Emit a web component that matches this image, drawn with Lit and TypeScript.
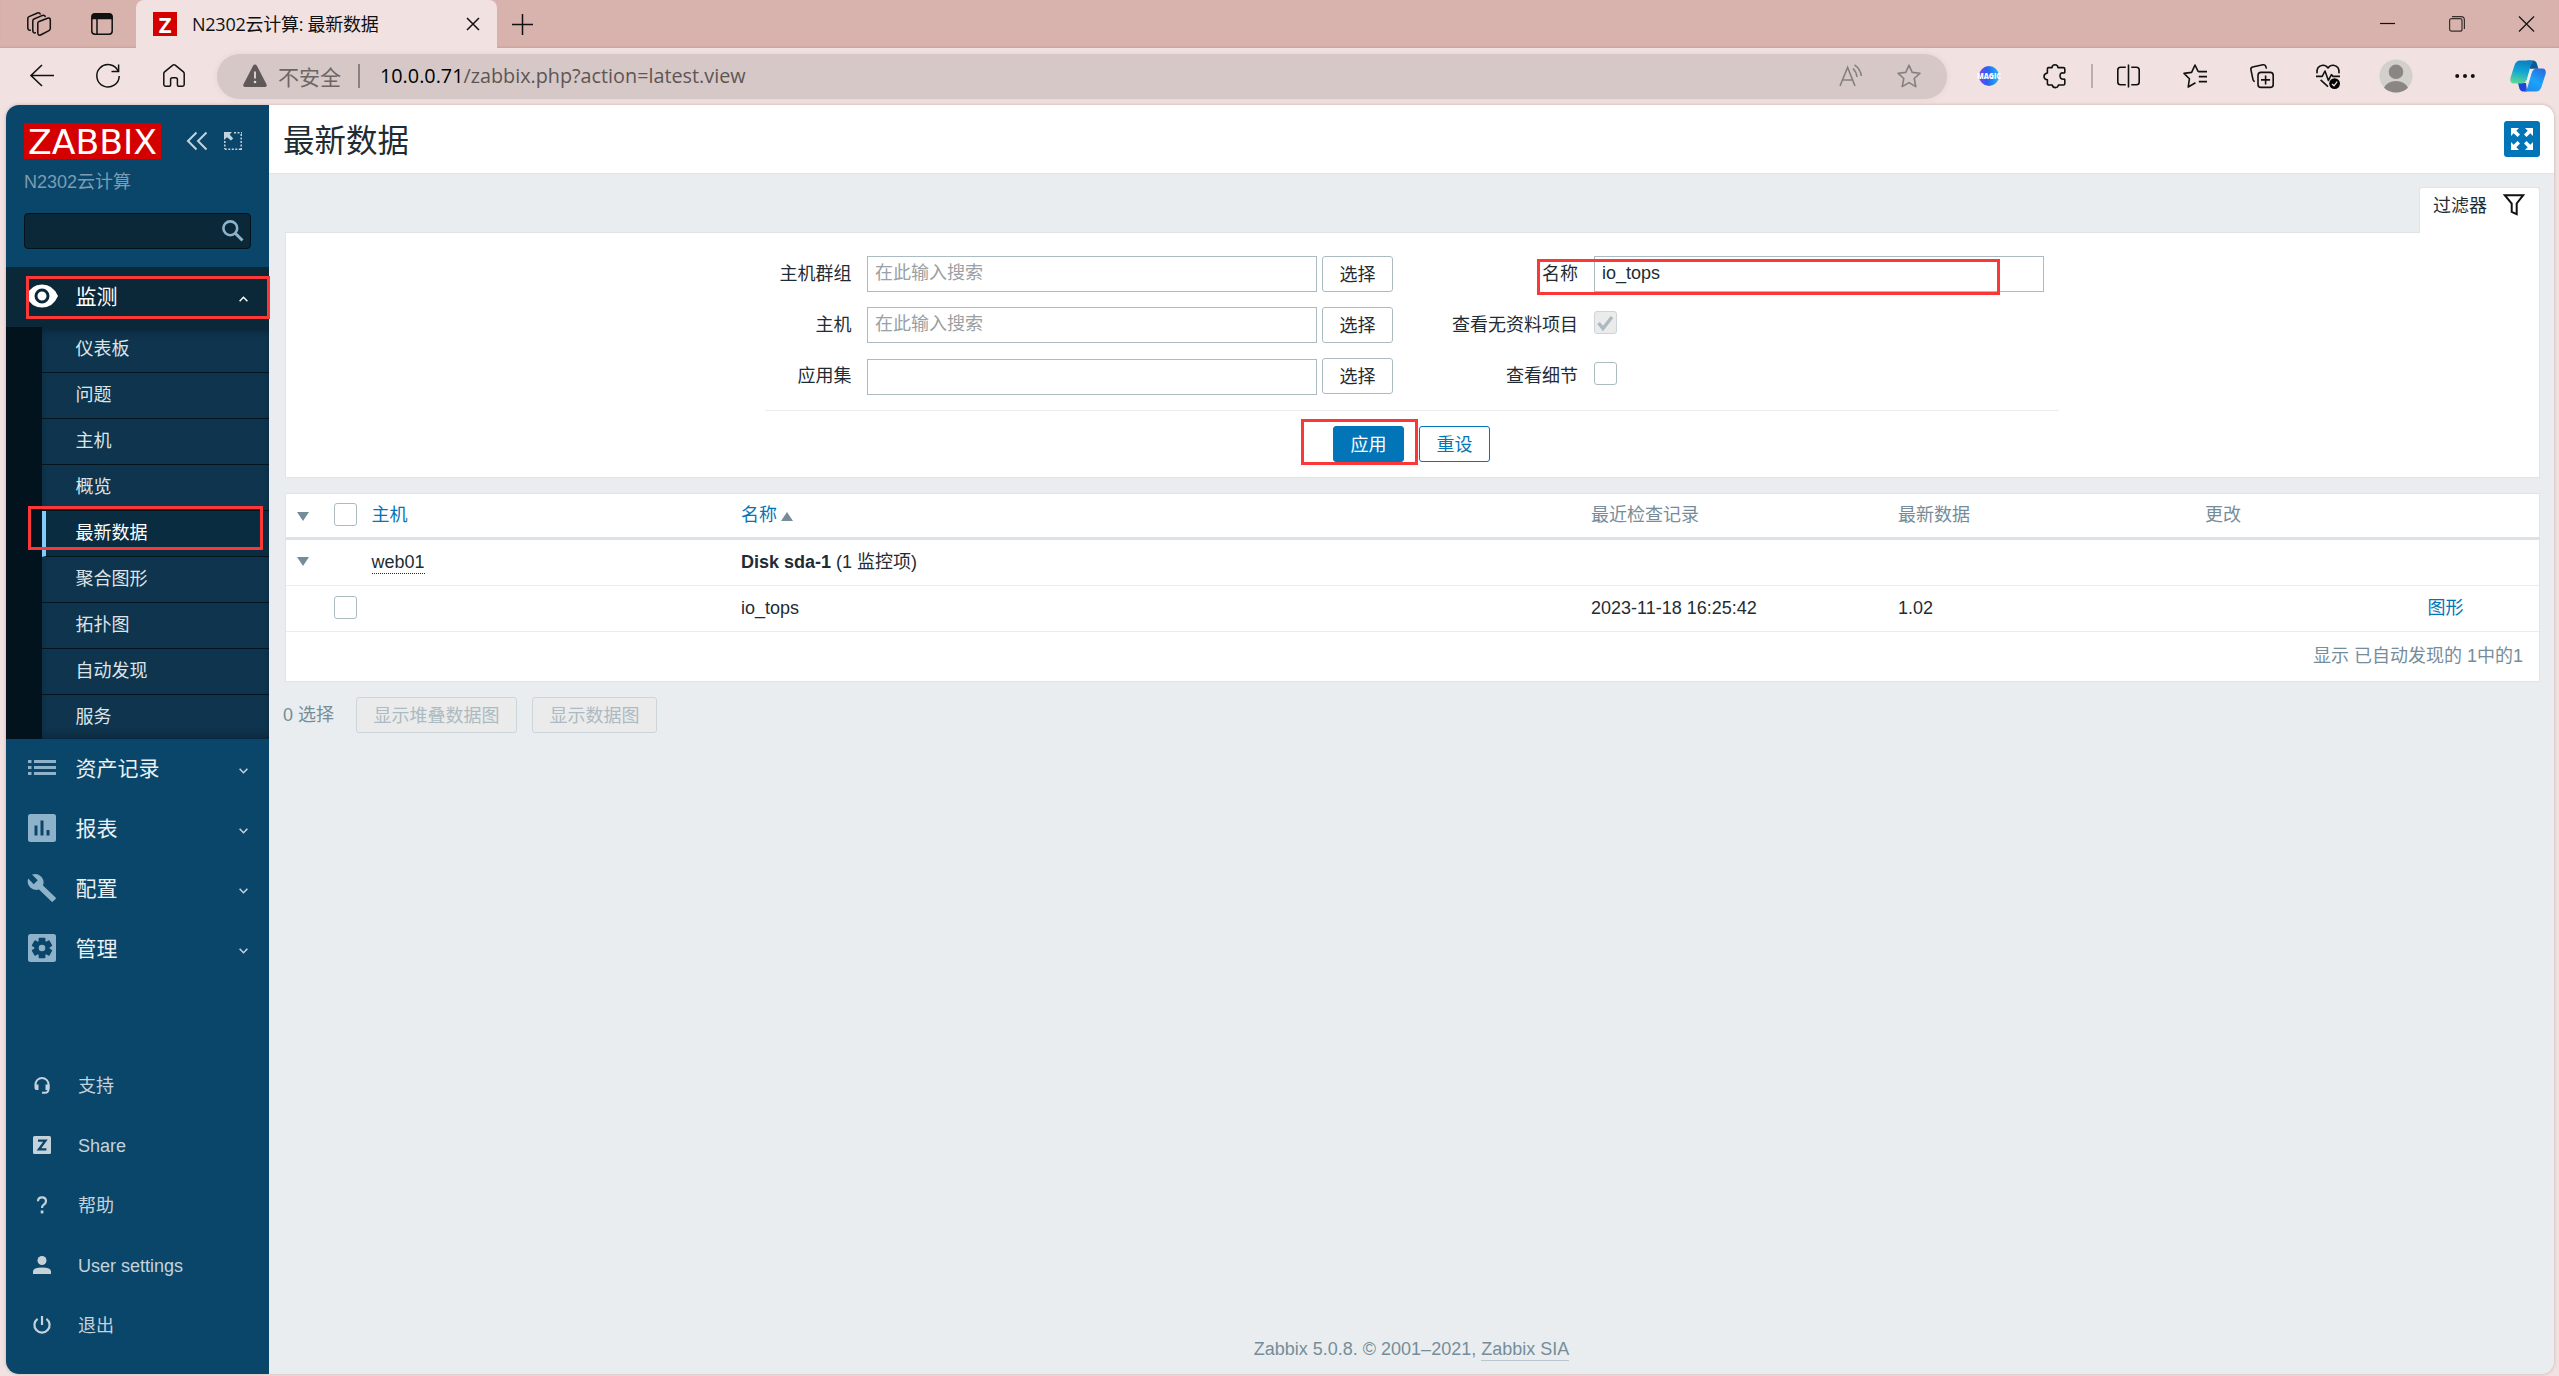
import { LitElement, html, svg, css, nothing, TemplateResult } from "lit";
import { customElement } from "lit/decorators.js";
import { classMap } from "lit/directives/class-map.js";

const icon = (w: number, h: number, body: unknown, cls = "") =>
  html`<svg class="ico ${cls}" width=${w} height=${h} viewBox="0 0 ${w} ${h}" fill="none">${body}</svg>`;

const STAR = "M12 1.2 L15.2 8.4 L23 9.2 L17.2 14.5 L18.8 22.6 L12 18.6 L5.2 22.6 L6.8 14.5 L1 9.2 L8.8 8.4 Z";

/* ---------- Browser chrome ---------- */

@customElement("browser-bar")
export class BrowserBar extends LitElement {
  static styles = css`
    :host { display: block; color: #111; font-family: "Open Sans", "Noto Sans CJK SC", sans-serif; }
    .ico { display: block; flex: none; overflow: visible; }
    .strip { height: 48px; background: #d8b2ac; display: flex; align-items: center; box-shadow: inset 0 -2px 2px -1px #c79f9a; }
    .ws { margin-left: 27px; }
    .vt { margin-left: 40px; }
    .tab { margin-left: 23px; width: 361px; height: 48px; background: #f1e2e1; border-radius: 8px 8px 0 0; display: flex; align-items: center; box-sizing: border-box; padding: 0 17px; }
    .fav { width: 24px; height: 24px; background: #d40000; color: #fff; font: 700 22px/24px "Open Sans", sans-serif; text-align: center; }
    .title { margin-left: 15px; font-size: 18px; line-height: 24px; white-space: nowrap; flex: 1; letter-spacing: -0.25px; }
    .plus { margin-left: 15px; }
    .win { margin-left: auto; display: flex; align-items: center; gap: 54px; padding-right: 25px; }
    .tools { height: 57px; background: #f1e2e1; display: flex; align-items: center; box-sizing: border-box; padding-bottom: 1px; }
    .back { margin-left: 30px; }
    .reload { margin-left: 42px; }
    .home { margin-left: 43px; }
    .url { margin-left: 32px; width: 1730px; height: 45px; border-radius: 23px; background: #d6c8c7; display: flex; align-items: center; box-sizing: border-box; padding-left: 26px; box-shadow: 0 0 6px #e3d2d0; font-size: 19.8px; color: #5d5655; white-space: nowrap; }
    .warn-text { margin-left: 11px; font-size: 21px; color: #6c6665; width: 63px; }
    .bar { width: 2px; height: 24px; background: #8a8281; margin: 0 20px 0 17px; }
    .addr { padding-bottom: 1px; }
    .addr b { font-weight: 400; color: #000; }
    .read { margin-left: auto; }
    .favs { margin: 0 26px 0 35px; }
    .ext { display: grid; grid-template-columns: 66px 66px 8px 65px 68px 65px 67px 70px 68px 58px; justify-items: center; align-items: center; margin-left: 9px; }
    .sep { width: 2px; height: 24px; background: #bdaeac; }
  `;

  render() {
    const k = "#111";
    return html`
      <div class="strip">
        ${icon(24, 24, svg`<g stroke=${k} stroke-width="1.5" stroke-linejoin="round" stroke-linecap="round">
          <path d="M11.5 9.8 L20.5 6.2 Q23.3 5.4 23.3 8 V16.6 Q23.3 18 22 18.6 L13.5 23 Q11 23.8 10.8 21 V11.2 Q10.8 10.2 11.5 9.8Z"/>
          <path d="M8.3 20.8 Q6 21.3 5.8 18.6 V9 Q5.8 7.6 7 7 L15.5 3.4 Q17.6 2.9 18.2 4.4"/>
          <path d="M3.3 18.3 Q1 18.4 .8 16 V6.6 Q.8 5.2 2 4.6 L10.5 1 Q12.6 .4 13.2 2"/></g>`, "ws")}
        ${icon(22, 22, svg`<rect x=".8" y=".8" width="20.4" height="20.4" rx="3.2" stroke=${k} stroke-width="1.5"/><path d="M.8 6.3V4Q.8.8 4 .8H18Q21.2.8 21.2 4V6.3Z" fill=${k}/><path d="M6 6V21" stroke=${k} stroke-width="1.5"/>`, "vt")}
        <div class="tab">
          <div class="fav">Z</div>
          <div class="title">N2302云计算: 最新数据</div>
          ${icon(14, 14, svg`<path d="M1 1L13 13M13 1L1 13" stroke=${k} stroke-width="1.5"/>`)}
        </div>
        ${icon(21, 21, svg`<path d="M10.5 0V21M0 10.5H21" stroke=${k} stroke-width="1.5"/>`, "plus")}
        <div class="win">
          ${icon(15, 16, svg`<path d="M0 7.5H15" stroke=${k} stroke-width="1.2"/>`)}
          ${icon(16, 16, svg`<rect x=".6" y="2.6" width="12.4" height="12.6" rx="2" stroke="#3b2f2e" stroke-width="1.2"/><path d="M3 .7H12Q15.4.7 15.4 4V13" stroke="#3b2f2e" stroke-width="1.2"/>`)}
          ${icon(15, 16, svg`<path d="M0 .5L15 15.5M15 .5L0 15.5" stroke=${k} stroke-width="1.2"/>`)}
        </div>
      </div>
      <div class="tools">
        ${icon(24, 24, svg`<path d="M24 11.5H1M12 1L1 11.5L12 22" stroke=${k} stroke-width="1.6"/>`, "back")}
        ${icon(24, 24, svg`<path d="M22.2 7.2A11.2 11.2 0 1 0 23.2 12" stroke=${k} stroke-width="1.5"/><path d="M22.6 .5V7.6H15.5" stroke=${k} stroke-width="1.5"/>`, "reload")}
        ${icon(22, 24, svg`<path d="M.8 9.6Q.8 8.6 1.6 7.9L9.8 1.2Q11 .4 12.2 1.2L20.4 7.9Q21.2 8.6 21.2 9.6V20.6Q21.2 22.2 19.6 22.2H15.6Q14.4 22.2 14.4 21V15.6Q14.4 13.8 12.6 13.8H9.4Q7.6 13.8 7.6 15.6V21Q7.6 22.2 6.4 22.2H2.4Q.8 22.2 .8 20.6Z" stroke=${k} stroke-width="1.5"/>`, "home")}
        <div class="url">
          ${icon(24, 24, svg`<path d="M12 .6Q13.2.6 13.9 1.8L23.5 20.2Q24.5 23 22 23H2Q-.5 23 .5 20.2L10.1 1.8Q10.8.6 12 .6Z" fill="#5f5a59"/><path d="M12 7.4V14.6" stroke="#e4d9d8" stroke-width="1.8"/><circle cx="12" cy="18" r="1.3" fill="#e4d9d8"/>`)}
          <span class="warn-text">不安全</span>
          <span class="bar"></span>
          <span class="addr"><b>10.0.0.71</b>/zabbix.php?action=latest.view</span>
          ${icon(23, 24, svg`<path d="M1 22L8.6 3.5L16 22M3.6 16H13.6M14 4.5Q17.5 8 18 13M15.5 .8Q21.5 5 22.3 12" stroke="#858080" stroke-width="1.6"/>`, "read")}
          ${icon(24, 24, svg`<path d=${STAR} stroke="#858080" stroke-width="1.6" stroke-linejoin="round"/>`, "favs")}
        </div>
        <div class="ext">
          ${icon(24, 24, svg`<defs><linearGradient id="mg" x1="0" y1="0" x2="1" y2="0"><stop offset="0" stop-color="#8b3df0"/><stop offset=".4" stop-color="#2a5ff2"/><stop offset="1" stop-color="#22b4f5"/></linearGradient></defs><circle cx="12" cy="12" r="10" fill="url(#mg)"/><text x="0" y="15" textLength="24" lengthAdjust="spacingAndGlyphs" font-family="Open Sans" font-weight="800" font-size="8" fill="#fff">MAGIC</text>`)}
          ${icon(24, 24, svg`<path d="M5.4 3.6H9Q9.2.8 12 .8T15 3.6H20.4Q21.8 3.6 21.8 5V8.6Q21.6 9.2 20.6 9Q17 8.4 17 11.8T20.6 15.2Q21.6 15 21.8 15.8V19.6Q21.8 21 20.4 21H15.4Q15 23.6 12.4 23.6T9.2 21H6.2Q4.4 21 4.4 19.4V15.8Q1 15.2 1 12.4T4.4 9V5Q4.4 3.6 5.4 3.6Z" stroke=${k} stroke-width="1.6" stroke-linejoin="round"/>`)}
          <span class="sep"></span>
          ${icon(23, 24, svg`<path d="M8.8 3.2H3.6Q.8 3.2.8 6V18Q.8 20.8 3.6 20.8H8.8M14.2 3.2H19.4Q22.2 3.2 22.2 6V18Q22.2 20.8 19.4 20.8H14.2M11.5 .5V23.5" stroke=${k} stroke-width="1.6"/>`)}
          ${icon(24, 24, svg`<path d="M12.5 18.8L5.2 23L6.4 14.8L1 9.4L8.6 8.4L12 1L15.2 7.6M15.2 7.6H24M15.8 12.6H24M15.8 17.6H24" stroke=${k} stroke-width="1.6" stroke-linejoin="round"/>`)}
          ${icon(24, 24, svg`<rect x="8" y="8.4" width="15.2" height="15" rx="3" stroke=${k} stroke-width="1.6"/><path d="M15.6 11.4V20.4M11 15.9H20.1M4.8 17.6Q3.4 17.2 3 15.6L.9 5.6Q.6 3.6 2.6 3L12.8.8Q15 .4 15.8 2.4L16.4 4.6" stroke=${k} stroke-width="1.6"/>`)}
          ${icon(24, 24, svg`<path d="M1 9.4Q.2 2 6.6 1.2Q10 1 12 4Q14 1 17.4 1.2Q23.8 2 23 9.4M0 12.4H6.2L9 7L12.4 16.4L15.4 10.6L17 12.4H24M4.6 15.8L12 22.6" stroke=${k} stroke-width="1.6" stroke-linejoin="round"/><circle cx="18.6" cy="19.6" r="5.4" fill="#000"/><path d="M16 20L18 21.8L21.2 17.6" stroke="#f1e2e1" stroke-width="1.3"/>`)}
          ${icon(34, 34, svg`<circle cx="17" cy="17" r="16.6" fill="#d3d0cc"/><circle cx="17" cy="12.8" r="7.3" fill="#8b8683"/><path d="M5 28.8Q8.5 22 17 22T29 28.8Q24 33.6 17 33.6T5 28.8Z" fill="#8b8683"/>`)}
          ${icon(20, 6, svg`<circle cx="2.2" cy="3" r="2" fill="#111"/><circle cx="10" cy="3" r="2" fill="#111"/><circle cx="17.8" cy="3" r="2" fill="#111"/>`)}
          ${icon(36, 32, svg`<defs><linearGradient id="ca" x1=".5" y1="0" x2=".3" y2="1"><stop offset="0" stop-color="#0a7fc2"/><stop offset=".45" stop-color="#12a4d4"/><stop offset="1" stop-color="#5edb92"/></linearGradient><linearGradient id="cb" x1=".8" y1="0" x2=".3" y2="1"><stop offset="0" stop-color="#2b6be0"/><stop offset=".55" stop-color="#1ba4fa"/><stop offset="1" stop-color="#1f8af0"/></linearGradient></defs>
            <path d="M17 .5H23Q26 .6 27 4L28.4 8.8H20Z" fill="#0b5a93"/><path d="M8 23H16L17 31.5H13.5Q10.400 31.500 9.400 28.400Z" fill="#1b46d8"/>
            <path d="M10 .5H20.5Q23.500 .7 22.600 3.600Q21 3.800 20 8L17 19.500Q15.600 23.600 11.600 23.600H3.600Q-.6 23.400 .4 18L4.600 5Q6.200.5 10 .5Z" fill="url(#ca)"/>
            <path d="M26 31.5H13.5Q16.500 31 17.600 27L21.400 13.500Q23 8.600 27 8.600H32.400Q36.600 8.800 35.600 14L31.400 27Q29.800 31.500 26 31.500Z" fill="url(#cb)"/>
            <path d="M19.600 10.500H22.400Q21.600 11.800 21.200 13.500L18.600 22.400H14.600Q16.300 21.500 17 19.500Z" fill="#f4ecec"/>`)}
        </div>
      </div>`;
  }
}

/* ---------- Sidebar ---------- */

type Main = { label: string; art: TemplateResult };

@customElement("side-nav")
export class SideNav extends LitElement {
  static styles = css`
    :host { width: 263px; flex: none; background: #0a466a; display: flex; flex-direction: column; position: relative; font: 18px/24px "Liberation Sans", "Noto Sans CJK SC", sans-serif; color: #eaf0f3; }
    .ico { display: block; flex: none; overflow: visible; }
    .head { display: flex; align-items: center; padding: 18px 0 0 18px; height: 36px; }
    .logo { display: block; background: #d40000; }
    .collapse { margin-left: 26px; }
    .kiosk { margin-left: 17px; }
    .server { margin: 11px 0 0 18px; height: 24px; color: #7c9cb1; }
    .search { margin: 19px 18px 18px; height: 36px; box-sizing: border-box; border: 1px solid #03131d; border-radius: 4px; background: #0a2838; display: flex; align-items: center; justify-content: flex-end; padding-right: 6px; }
    .row { height: 60px; display: flex; align-items: center; font-size: 21px; }
    .row.open { background: #0a2838; color: #fff; }
    .slot { width: 69.5px; box-sizing: border-box; padding-left: 20px; }
    .slot .ico { width: 32px; margin-top: -2px; }
    .name { flex: 1; padding-bottom: 1px; }
    .chev { margin: 4px 21px 0 0; }
    .sub { background: #0f344d; border-left: 36px solid #03131d; box-shadow: inset 0 9px 9px -6px #0a2232, inset 0 -6px 8px -5px #0a2232; height: 412px; }
    .item { height: 45px; border-bottom: 1px solid #04141f; display: flex; align-items: center; padding: 0 0 1px 33.5px; box-sizing: border-box; height: 46px; color: #dde4e9; }
    .item:last-child { border-bottom: 0; height: 44px; }
    .item.on { background: #0a2c41; color: #fff; border-left: 4px solid #81ccff; padding-left: 29.5px; }
    .foot { margin-top: auto; padding-bottom: 18px; }
    .link { height: 60px; display: flex; align-items: center; color: #c6d2da; }
    .cell { width: 72px; box-sizing: border-box; padding: 0 0 2px 27px; }
    .mark { position: absolute; border: 3px solid #fb3737; box-sizing: border-box; }
    .m1 { left: 20px; top: 171px; width: 244px; height: 43px; }
    .m2 { left: 22px; top: 401px; width: 235px; height: 44px; }
  `;

  private subs = ["仪表板", "问题", "主机", "概览", "最新数据", "聚合图形", "拓扑图", "自动发现", "服务"];

  private mains: Main[] = [
    { label: "资产记录", art: icon(32, 28, svg`<path d="M2 7.5H5.5M8 7.5H30M2 13.5H5.5M8 13.5H30M2 19.5H5.5M8 19.5H30" stroke="#8db2ca" stroke-width="3"/>`) },
    { label: "报表", art: icon(32, 28, svg`<path fill-rule="evenodd" d="M4.5 0H27.5Q30 0 30 2.5V25.500Q30 28 27.5 28H4.500Q2 28 2 25.5V2.500Q2 0 4.500 0ZM8.500 11.500V21.500H11.500V11.500ZM14.500 6.500V21.500H17.500V6.500ZM20.500 16V21.500H23.500V16Z" fill="#8db2ca"/>`) },
    { label: "配置", art: icon(32, 28, svg`<path d="M29.600 23.600L17 11.400Q18.800 6.200 15 2.400Q11 -1.400 6 .6L11.700 6.200L7.700 10.200L2.200 4.600Q.4 9.600 4.200 13.400Q8 17 13 15.400L25.500 27.600Q26.200 28.200 26.900 27.600L29.600 25Q30.200 24.300 29.600 23.600Z" fill="#8db2ca"/>`) },
    { label: "管理", art: icon(32, 28, svg`<rect x="2" y="0" width="28" height="28" rx="2.500" fill="#8db2ca"/><g fill="#0a466a"><circle cx="16" cy="14" r="7.600"/>${[0, 60, 120].map((a) => svg`<rect x="12.600" y="3.800" width="6.800" height="20.400" rx="1" transform="rotate(${a} 16 14)"/>`)}</g><circle cx="16" cy="14" r="3.300" fill="#8db2ca"/>`) },
  ];

  private links: Main[] = [
    { label: "支持", art: icon(18, 18, svg`<path d="M2.500 9V8.500A6.500 6.500 0 0 1 15.500 8.500V13Q15.500 16.800 12 16.800H9" stroke="#c6d2da" stroke-width="2"/><path d="M1.500 8.500H5.500V14H3.500Q1.500 14 1.500 12ZM12.500 8.500H16.500V12Q16.500 14 14.500 14H12.500Z" fill="#c6d2da"/>`) },
    { label: "Share", art: icon(18, 18, svg`<rect width="18" height="18" rx="1.500" fill="#c6d2da"/><path d="M5 4.600H12.400L6 13.400H13.400" stroke="#0a466a" stroke-width="2.400"/>`) },
    { label: "帮助", art: icon(18, 18, svg`<path d="M5 5.200Q5 1.300 9 1.300T13 5Q13 7.200 10.800 8.600Q9 9.700 9 12" stroke="#c6d2da" stroke-width="2.200"/><rect x="7.700" y="14.500" width="2.700" height="2.900" fill="#c6d2da"/>`) },
    { label: "User settings", art: icon(18, 18, svg`<circle cx="9" cy="4.500" r="4.500" fill="#c6d2da"/><path d="M0 18V15.500Q0 11.500 9 11.500T18 15.500V18Z" fill="#c6d2da"/>`) },
    { label: "退出", art: icon(18, 18, svg`<path d="M9 0V9M4.600 2.800A7.600 7.600 0 1 0 13.400 2.800" stroke="#c6d2da" stroke-width="2.200"/>`) },
  ];

  render() {
    const down = icon(9, 6, svg`<path d="M.6 .8L4.500 4.700L8.400 .8" stroke="#c6d6e0" stroke-width="1.500"/>`, "chev");
    return html`
      <div class="head">
        <svg class="ico logo" width="137" height="36"><text x="4" y="30.500" textLength="129" lengthAdjust="spacingAndGlyphs" font-family="DejaVu Sans" font-size="34.500" fill="#fff">ZABBIX</text></svg>
        ${icon(20, 18, svg`<path d="M9.500 .5L1 9L9.500 17.500M19.500 .5L11 9L19.500 17.500" stroke="#c3d3de" stroke-width="2"/>`, "collapse")}
        ${icon(18, 18, svg`<path d="M10 .8H18M17.200 2V18M.8 17.200H17M.8 9V17" stroke="#c3d3de" stroke-width="1.500" stroke-dasharray="2 1.500"/><path d="M0 0H8L5.600 2.400L9.200 6.400L7 8.600L3 5.200L0 8Z" fill="#c3d3de"/>`, "kiosk")}
      </div>
      <div class="server">N2302云计算</div>
      <div class="search">${icon(22, 22, svg`<circle cx="8.300" cy="8.300" r="6.900" stroke="#8db2ca" stroke-width="2.600"/><path d="M13 13L20.500 20.500" stroke="#8db2ca" stroke-width="3"/>`)}</div>
      <div class="row open">
        <div class="slot">${icon(32, 24, svg`<path d="M0 12Q5 .5 16 .5T32 12Q27 23.500 16 23.500T0 12Z" fill="#fff"/><circle cx="16" cy="12" r="6" stroke="#0a2838" stroke-width="3"/>`)}</div>
        <div class="name">监测</div>
        ${icon(9, 6, svg`<path d="M.6 5.200L4.500 1.300L8.400 5.200" stroke="#fff" stroke-width="1.500"/>`, "chev")}
      </div>
      <div class="sub">${this.subs.map((s) => html`<div class=${classMap({ item: true, on: s === "最新数据" })}>${s}</div>`)}</div>
      ${this.mains.map((m) => html`<div class="row"><div class="slot">${m.art}</div><div class="name">${m.label}</div>${down}</div>`)}
      <div class="foot">${this.links.map((l) => html`<div class="link"><div class="cell">${l.art}</div>${l.label}</div>`)}</div>
      <div class="mark m1"></div>
      <div class="mark m2"></div>`;
  }
}

/* ---------- Latest data view ---------- */

@customElement("latest-data")
export class LatestData extends LitElement {
  static styles = css`
    :host { flex: 1; min-width: 0; display: flex; flex-direction: column; background: #e9edf0; font: 18px/24px "Liberation Sans", "Noto Sans CJK SC", sans-serif; color: #1f2c33; }
    .ico { display: block; flex: none; overflow: visible; }
    .top { height: 69px; box-sizing: border-box; background: #fff; border-bottom: 1px solid #dfe4e7; display: flex; align-items: center; justify-content: space-between; padding: 0 14px 0 14px; }
    h1 { margin: 0; font-weight: 400; font-size: 31.500px; line-height: 40px; padding-top: 3px; }
    .full { width: 36px; height: 36px; border-radius: 3px; background: #0275b8; display: grid; place-items: center; margin-top: -1px; }
    .body { padding: 13px 14px 0 16px; flex: 1; display: flex; flex-direction: column; }
    .ftab { align-self: flex-end; width: 121px; height: 46px; margin-bottom: -1px; box-sizing: border-box; background: #fff; border: 1px solid #dfe4e7; border-bottom: 0; border-radius: 3px 3px 0 0; display: flex; justify-content: space-between; padding: 6px 14px 0 13px; position: relative; z-index: 1; }
    .panel { height: 246px; box-sizing: border-box; background: #fff; border: 1px solid #dfe4e7; padding: 23px 0 0 479px; position: relative; }
    .form { width: 1294px; height: 155px; box-sizing: border-box; border-bottom: 1px solid #e9edf0; display: flex; }
    .colA { width: 628px; }
    .line { display: flex; height: 51px; align-items: flex-start; }
    .lab { height: 36px; line-height: 37px; text-align: right; box-sizing: border-box; }
    .colA .lab { width: 86.5px; margin-right: 15.5px; }
    .colB .lab { width: 185px; margin-right: 16px; }
    .in { width: 450px; height: 36px; box-sizing: border-box; border: 1px solid #acbbc2; background: #fff; padding: 0 7px; line-height: 32px; color: #9aa0a3; }
    .in.val { color: #1f2c33; }
    .in.low { margin-top: 1px; }
    .btn { height: 36px; box-sizing: border-box; border: 1px solid #acbbc2; border-radius: 3px; background: #fff; line-height: 36px; text-align: center; width: 71px; }
    .line .btn { margin-left: 5px; }
    .btn.blue { border-color: #0275b8; color: #0275b8; }
    .btn.solid { background: #0275b8; color: #fff; }
    .btn.off { background: #ebebeb; border-color: #ccd5d9; color: #acbbc2; width: auto; padding: 0 16.5px; }
    .chk { width: 23px; height: 23px; box-sizing: border-box; border: 1px solid #acbbc2; border-radius: 3px; background: #fff; display: grid; place-items: center; }
    .line .chk { margin-top: 4px; }
    .chk.dis { background: #ebebeb; border-color: #ccd5d9; }
    .acts { display: flex; gap: 15px; padding: 15px 0 0 568px; }
    .table { margin-top: 15px; height: 189px; box-sizing: border-box; background: #fff; border: 1px solid #dfe4e7; }
    .tr { display: grid; grid-template-columns: 48px 37.500px 369.500px 850px 307px 307px 222.500px 1fr; align-items: center; height: 43px; padding-bottom: 2px; border-bottom: 1px solid #ebeef0; }
    .tr.th { height: 42px; padding-bottom: 1px; border-bottom: 3px solid #dce2e5; color: #768d99; }
    .th .chk { margin-bottom: 1px; }
    .tri { padding-left: 11px; }
    .lk { color: #0275b8; }
    .sort { display: flex; align-items: center; gap: 4px; }
    .sort .ico, .th .tri { margin-top: 2px; }
    .tr:not(.th) .tri { margin-top: -1px; }
    .dot { border-bottom: 1px dotted #1f2c33; display: inline-block; line-height: 22px; }
    .tf { text-align: right; padding-right: 16px; color: #768d99; line-height: 49px; }
    .below { display: flex; align-items: center; margin: 15px 0 0 -2px; color: #768d99; }
    .below .a { margin-left: 22px; }
    .below .b { margin-left: 15px; }
    .foot { margin-top: auto; padding-bottom: 13px; text-align: center; color: #768d99; padding-right: 2px; }
    .foot u { text-decoration: none; border-bottom: 1px solid #b9c6cc; display: inline-block; line-height: 22px; }
    .mark { position: absolute; border: 3px solid #fb3737; box-sizing: border-box; }
    .m3 { left: 1251px; top: 26px; width: 463px; height: 36px; }
    .m4 { left: 1015px; top: 186px; width: 117px; height: 46px; }
  `;

  private tri(up = false) {
    return icon(12, 9, up ? svg`<path d="M6 0L12 9H0Z" fill="#768d99"/>` : svg`<path d="M0 0H12L6 9Z" fill="#768d99"/>`);
  }

  render() {
    const pick = (label: string, ph: string) => html`
      <div class="line"><div class="lab">${label}</div><div class="in ${ph ? "" : "low"}">${ph || nothing}</div><div class="btn">选择</div></div>`;
    return html`
      <div class="top">
        <h1>最新数据</h1>
        <div class="full">${icon(22, 22, svg`<g fill="#fff">${[0, 90, 180, 270].map((a) => svg`<path transform="rotate(${a} 11 11)" d="M0 0H8L5.300 2.700L9 6.500L6.500 9L2.700 5.300L0 8Z"/>`)}</g>`)}</div>
      </div>
      <div class="body">
        <div class="ftab"><span>过滤器</span>${icon(22, 22, svg`<path d="M1.800 1.200H20.200L13.700 9.500V20.200L8.700 17.800V9.500Z" stroke="#111" stroke-width="2"/>`)}</div>
        <div class="panel">
          <div class="form">
            <div class="colA">${pick("主机群组", "在此输入搜索")}${pick("主机", "在此输入搜索")}${pick("应用集", "")}</div>
            <div class="colB">
              <div class="line"><div class="lab">名称</div><div class="in val">io_tops</div></div>
              <div class="line"><div class="lab">查看无资料项目</div><div class="chk dis">${icon(17, 16, svg`<path d="M1.500 8L6 13.500L15 2" stroke="#acbbc2" stroke-width="3.400"/>`)}</div></div>
              <div class="line"><div class="lab">查看细节</div><div class="chk"></div></div>
            </div>
          </div>
          <div class="acts"><div class="btn blue solid">应用</div><div class="btn blue">重设</div></div>
          <div class="mark m3"></div>
          <div class="mark m4"></div>
        </div>
        <div class="table">
          <div class="tr th">
            <div class="tri">${this.tri()}</div><div class="chk"></div><div class="lk">主机</div>
            <div class="lk sort">名称${this.tri(true)}</div><div>最近检查记录</div><div>最新数据</div><div>更改</div><div></div>
          </div>
          <div class="tr">
            <div class="tri">${this.tri()}</div><div></div><div><span class="dot">web01</span></div>
            <div><b>Disk sda-1</b> (1 监控项)</div><div></div><div></div><div></div><div></div>
          </div>
          <div class="tr">
            <div></div><div class="chk"></div><div></div><div>io_tops</div>
            <div>2023-11-18 16:25:42</div><div>1.02</div><div></div><div class="lk">图形</div>
          </div>
          <div class="tf">显示 已自动发现的 1中的1</div>
        </div>
        <div class="below"><span>0 选择</span><div class="btn off a">显示堆叠数据图</div><div class="btn off b">显示数据图</div></div>
        <div class="foot">Zabbix 5.0.8. © 2001–2021, <u>Zabbix SIA</u></div>
      </div>`;
  }
}

@customElement("app-root")
export class AppRoot extends LitElement {
  static styles = css`
    :host { display: block; width: 2559px; height: 1376px; background: #f1e2e1; overflow: hidden; }
    .wrap { margin: 0 5px 0 6px; border-radius: 13px; box-shadow: 0 0 3px 1px #d9c3c1; }
    .page { display: flex; height: 1269px; border-radius: 13px; overflow: hidden; }
  `;

  render() {
    return html`<browser-bar></browser-bar>
      <div class="wrap"><div class="page"><side-nav></side-nav><latest-data></latest-data></div></div>`;
  }
}
